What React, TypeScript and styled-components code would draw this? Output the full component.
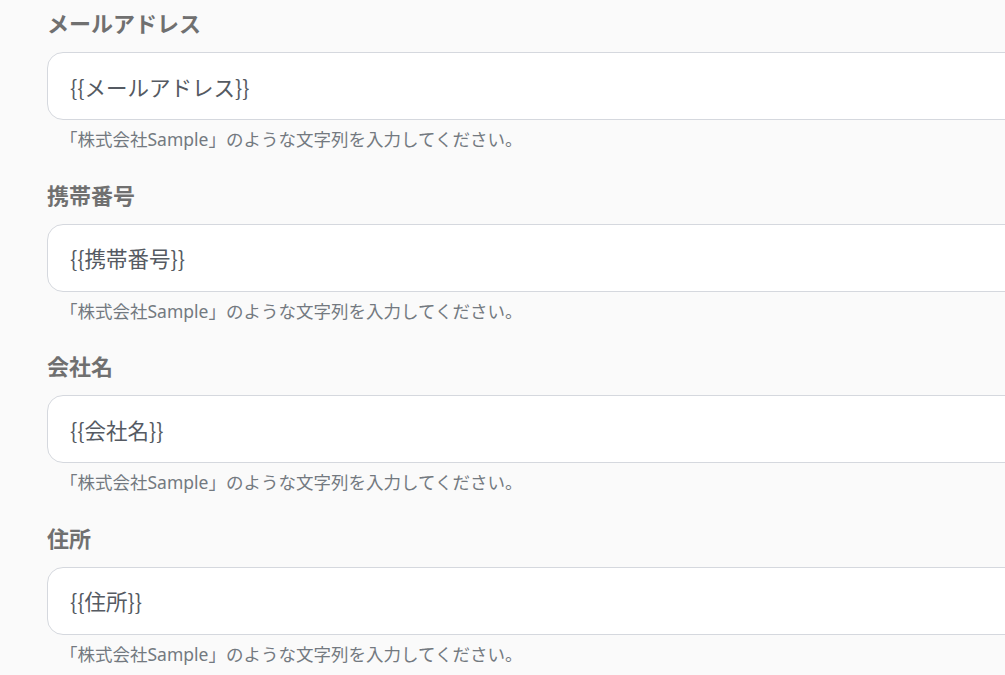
import React from 'react';
import styled, { createGlobalStyle } from 'styled-components';

const GlobalStyle = createGlobalStyle`
  html, body {
    margin: 0;
    padding: 0;
    background: #fafafa;
    overflow: hidden;
  }
  body {
    font-family: "Noto Sans", "Noto Sans CJK JP", sans-serif;
  }
`;

const Form = styled.div`
  width: 990px;
  padding: 8px 0 0 47px;
`;

const Field = styled.div`
  display: flex;
  flex-direction: column;
  margin-bottom: 27.5px;
`;

const Label = styled.div`
  font-size: 22px;
  line-height: 30px;
  font-weight: 700;
  color: #707070;
  margin-bottom: 14px;
`;

const Input = styled.div`
  box-sizing: border-box;
  height: 68px;
  display: flex;
  align-items: center;
  padding: 0 22px;
  background: #ffffff;
  border: 1px solid #d5d8de;
  border-radius: 16px;
  font-family: "Noto Sans CJK JP", "Noto Sans", sans-serif;
  font-size: 21.5px;
  color: #555a62;
`;

const Help = styled.div`
  margin-top: 6px;
  padding-left: 13px;
  font-size: 17.5px;
  line-height: 26px;
  color: #737980;
`;

const fields = ['メールアドレス', '携帯番号', '会社名', '住所'];

export default function App() {
  return (
    <>
      <GlobalStyle />
      <Form>
        {fields.map((name) => (
          <Field key={name}>
            <Label>{name}</Label>
            <Input>{`{{${name}}}`}</Input>
            <Help>「株式会社Sample」のような文字列を入力してください。</Help>
          </Field>
        ))}
      </Form>
    </>
  );
}
